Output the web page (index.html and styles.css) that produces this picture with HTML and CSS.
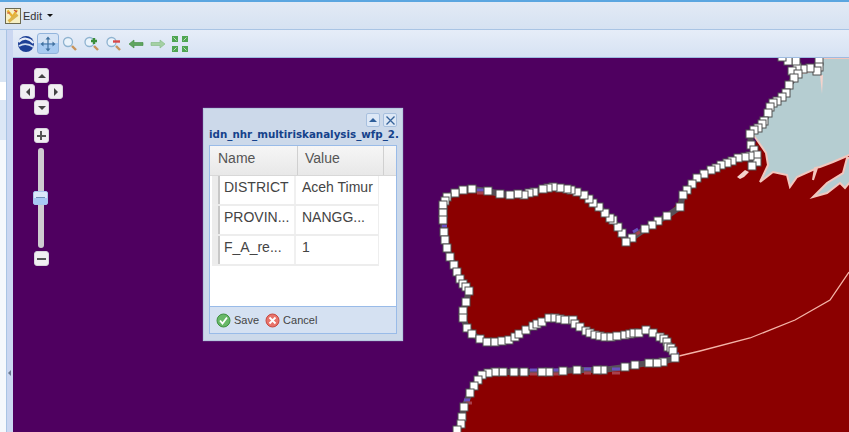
FILE: index.html
```html
<!DOCTYPE html>
<html lang="en">
<head>
<meta charset="utf-8">
<title>Map editor</title>
<link rel="stylesheet" href="styles.css">
</head>
<body>
<div class="app">
  <header class="menubar">
    <svg class="edit-icon" width="16" height="16" viewBox="0 0 16 16">
      <rect x="0.5" y="0.5" width="15" height="15" fill="#f6efc4" stroke="#6d6a50"/>
      <path d="M2.500 2.500l5 6M12 2L6 11" stroke="#e8b030" stroke-width="2.200" fill="none"/>
      <path d="M3.500 13.500l9-7" stroke="#dcb44a" stroke-width="3" fill="none"/>
      <path d="M2 5h3M9 2l3 2" stroke="#c85040" stroke-width="1.200" fill="none"/>
    </svg>
    <span class="menu-label">Edit</span>
    <span class="menu-caret"></span>
  </header>
  <div class="workspace">
    <aside class="side">
      <div class="side-panel">
        <div class="side-head"></div>
        <div class="side-row-white"></div>
        <div class="side-row-blue"></div>
      </div>
      <div class="splitter"><span class="split-arrow"></span></div>
    </aside>
    <main class="main">
      <div class="toolbar">
        <div class="tool">
          <svg width="18" height="18" viewBox="0 0 18 18">
            <circle cx="9" cy="9" r="8" fill="#1c3f95"/>
            <path d="M1.500 7C6 2 12 3 16.500 8" stroke="#e8eef8" stroke-width="2.200" fill="none"/>
            <path d="M2 11c5-3 10-2 14.500 1" stroke="#cfdcf0" stroke-width="1.800" fill="none"/>
          </svg>
        </div>
        <div class="tool tool-active">
          <svg width="16" height="16" viewBox="0 0 16 16">
            <path d="M8 2v12M2 8h12" stroke="#41719f" stroke-width="1.200" fill="none"/>
            <path d="M8 0.500l-2.500 3h5zM8 15.500l-2.500-3h5zM0.500 8l3-2.500v5zM15.500 8l-3-2.500v5z" fill="#41719f"/>
          </svg>
        </div>
        <div class="tool">
          <svg width="16" height="16" viewBox="0 0 16 16">
            <circle cx="6" cy="6" r="4.500" fill="#eaf3fb" stroke="#8fb3d0" stroke-width="1.300"/>
            <path d="M10 10l4 4" stroke="#c8935a" stroke-width="2.400"/>
          </svg>
        </div>
        <div class="tool">
          <svg width="16" height="16" viewBox="0 0 16 16">
            <circle cx="5.500" cy="6" r="4.500" fill="#eaf3fb" stroke="#8fb3d0" stroke-width="1.300"/>
            <path d="M10 10l4 4" stroke="#c8935a" stroke-width="2.400"/>
            <path d="M10 2v6M7 5h6" stroke="#3b8e3b" stroke-width="2.400"/>
          </svg>
        </div>
        <div class="tool">
          <svg width="16" height="16" viewBox="0 0 16 16">
            <circle cx="5.500" cy="6" r="4.500" fill="#eaf3fb" stroke="#8fb3d0" stroke-width="1.300"/>
            <path d="M10 10l4 4" stroke="#c8935a" stroke-width="2.400"/>
            <path d="M7 5.500h7" stroke="#d84848" stroke-width="2.400"/>
          </svg>
        </div>
        <div class="tool">
          <svg width="16" height="10" viewBox="0 0 16 10">
            <path d="M1 5l5-4v2.500h9v3H6V9z" fill="#5fa55f" stroke="#3f8a3f" stroke-width="0.600"/>
          </svg>
        </div>
        <div class="tool">
          <svg width="16" height="10" viewBox="0 0 16 10">
            <path d="M15 5l-5-4v2.500H1v3h9V9z" fill="#a4d0a4" stroke="#80b880" stroke-width="0.600"/>
          </svg>
        </div>
        <div class="tool">
          <svg width="18" height="18" viewBox="0 0 18 18">
            <path d="M1 1h6v6H1zM11 1h6v6h-6zM1 11h6v6H1zM11 11h6v6h-6z" fill="#4fa552"/>
            <path d="M2.500 2.500l3 3M15.500 2.500l-3 3M2.500 15.500l3-3M15.500 15.500l-3-3" stroke="#bfe0bf" stroke-width="1"/>
          </svg>
        </div>
      </div>
      <div class="map">
        <svg class="map-canvas" viewBox="13 58 836 374">
          <defs>
            <marker id="vertex" markerUnits="userSpaceOnUse" markerWidth="10" markerHeight="10" refX="5" refY="5" overflow="visible">
              <rect x="1" y="1" width="8" height="8" fill="#fff" stroke="#505050" stroke-width="1"/>
            </marker>
          </defs>
          <path class="land" d="M757 140L750 156 745 157 738 158 727 163 711 170 697 178 687 190 667 216 652 225 636 233 626 242 618 227 605 213 589 199 571 190 553 187 534 192 518 194 500 194 480 190 463 190 447 197 443 213 445 240 454 265 469 291 466 302 463 318 472 334 487 342 509 340 526 330 549 318 573 320 590 333 611 337 646 330 664 339 675 358 635 365 587 370 533 372 488 373 478 380 467 401 461 424 457 432H849V140z"/>
          <path class="water" d="M819 58H851V154L847 156 833 162 820 167 815 168 813 180 817 168 797 177 790 187 787 175 773 172 760 182 768 165 766 153 757 140 750 131 758 128 768 113 782 97 789 85 798 74 817 70z"/>
          <path class="water" d="M851 158H847L843 173 827 183 813 197 827 193 840 183 845 188 851 181z"/>
          <path class="sliver" d="M820 75l2 19 1-19zM737 177l8-7 4 2-5 5-4 2z"/>
          <polyline class="roadline" points="679 356 700 351 750 338 795 320 830 300 849 272"/>
          <polyline class="edge" points="819 61 819 67 817 71 810 68 803 69 797 67 792 71 798 74 794 78 789 85 786 93 782 97 777 101 773 103 770 107 768 113 764 121 762 124 758 128 754 130 750 134 751 145 754 150 757 155 757 162 752 166 750 156 745 157 738 158 732 161 727 163 721 165 716 168 711 170 704 174 697 178 692 184 687 190 683 195 680 207 667 216 658 221 652 225 645 229 632 238 626 242 622 233 618 227 613 220 610 218 605 213 599 207 593 203 589 199 584 195 577 192 571 190 567 189 560 188 553 187 548 188 543 189 534 192 529 193 524 195 518 194 510 195 500 194 488 191 472 189 463 190 455 193 447 197 445 201 443 205 443 213 443 220 444 232 445 240 447 248 450 257 454 265 457 272 460 279 463 284 466 287 469 291 466 302 463 311 463 318 467 328 472 334 480 339 487 342 495 342 502 341 509 340 515 337 519 334 526 330 533 326 537 324 542 322 549 318 555 318 560 319 565 320 573 320 575 324 580 327 586 331 590 333 595 335 600 336 605 337 611 337 617 336 625 335 630 334 634 333 639 333 646 330 653 333 660 337 664 339 667 342 668 347 671 348 673 351 675 358 663 362 657 363 649 363 635 365 625 367 603 370 597 370 577 370 563 371 549 372 542 372 524 372 514 372 503 372 495 372 488 373 482 375 478 380 474 386 470 393 464 407 462 417 461 424 457 430"/>
          <path class="gap-top" d="M477 190h7M633 232l5-3M442 226h5M464 400h6M612 369h8M584 369h7M553 370h7M530 370h7M675 354h4"/>
          <path class="gap-low" d="M477 193h7M635 235l5-3M466 403h6M612 373h8M584 373h7M553 374h7M530 374h7"/>
          <polyline class="vertices" points="819 61 819 67 817 71 810 68 803 69 797 67 792 71 798 74 794 78 789 85 786 93 782 97 777 101 773 103 770 107 768 113 764 121 762 124 758 128 754 130 750 134 751 145 754 150 757 155 757 162 752 166 750 156 745 157 738 158 732 161 727 163 721 165 716 168 711 170 704 174 697 178 692 184 687 190 683 195 680 207 667 216 658 221 652 225 645 229 632 238 626 242 622 233 618 227 613 220 610 218 605 213 599 207 593 203 589 199 584 195 577 192 571 190 567 189 560 188 553 187 548 188 543 189 534 192 529 193 524 195 518 194 510 195 500 194 488 191 472 189 463 190 455 193 447 197 445 201 443 205 443 213 443 220 444 232 445 240 447 248 450 257 454 265 457 272 460 279 463 284 466 287 469 291 466 302 463 311 463 318 467 328 472 334 480 339 487 342 495 342 502 341 509 340 515 337 519 334 526 330 533 326 537 324 542 322 549 318 555 318 560 319 565 320 573 320 575 324 580 327 586 331 590 333 595 335 600 336 605 337 611 337 617 336 625 335 630 334 634 333 639 333 646 330 653 333 660 337 664 339 667 342 668 347 671 348 673 351 675 358 663 362 657 363 649 363 635 365 625 367 603 370 597 370 577 370 563 371 549 372 542 372 524 372 514 372 503 372 495 372 488 373 482 375 478 380 474 386 470 393 464 407 462 417 461 424 457 430"/>
          <polyline class="vertices" points="796 61 788 61 782 57"/>
        </svg>

        <div class="nav">
          <div class="pan">
            <button class="nav-btn pan-up"><span class="tri tri-up"></span></button>
            <button class="nav-btn pan-left"><span class="tri tri-left"></span></button>
            <button class="nav-btn pan-right"><span class="tri tri-right"></span></button>
            <button class="nav-btn pan-down"><span class="tri tri-down"></span></button>
          </div>
          <button class="nav-btn zoom-in"><span class="sign sign-plus"></span></button>
          <div class="slider"><span class="thumb"></span></div>
          <button class="nav-btn zoom-out"><span class="sign"></span></button>
        </div>

        <section class="popup">
          <div class="popup-tools">
            <span class="ptool"><span class="tri tri-up tri-blue"></span></span>
            <span class="ptool">
              <svg width="11" height="11" viewBox="0 0 11 11"><path d="M1.500 1.500l8 8M9.500 1.500l-8 8" stroke="#36639a" stroke-width="1.300"/></svg>
            </span>
          </div>
          <h2 class="popup-title">idn_nhr_multiriskanalysis_wfp_2.</h2>
          <div class="grid">
            <div class="grid-head">
              <span class="hcell hname">Name</span>
              <span class="hcell hvalue">Value</span>
              <span class="hcell hscroll"></span>
            </div>
            <div class="grid-body">
              <div class="row"><span class="mark"></span><span class="cname">DISTRICT</span><span class="cvalue">Aceh Timur</span></div>
              <div class="row"><span class="mark"></span><span class="cname">PROVIN...</span><span class="cvalue">NANGG...</span></div>
              <div class="row"><span class="mark"></span><span class="cname">F_A_re...</span><span class="cvalue">1</span></div>
            </div>
            <div class="grid-foot">
              <span class="act">
                <svg width="15" height="15" viewBox="0 0 15 15"><circle cx="7.500" cy="7.500" r="6.500" fill="#68b868" stroke="#3f9040"/><path d="M4 7.500l2.500 3L11 4.500" stroke="#fff" stroke-width="1.800" fill="none"/></svg>
                Save
              </span>
              <span class="act">
                <svg width="15" height="15" viewBox="0 0 15 15"><circle cx="7.500" cy="7.500" r="6.500" fill="#e8736a" stroke="#c8483f"/><path d="M4.500 4.500l6 6M10.500 4.500l-6 6" stroke="#fff" stroke-width="1.800"/></svg>
                Cancel
              </span>
            </div>
          </div>
        </section>
      </div>
    </main>
  </div>
</div>
</body>
</html>
```
FILE: styles.css
```css
* { box-sizing: border-box; }
html, body { margin: 0; padding: 0; }
body { width: 849px; height: 432px; overflow: hidden; font-family: "Liberation Sans", Arial, sans-serif; }
.app { display: flex; flex-direction: column; width: 849px; height: 432px; background: #dfe8f6; }

.menubar {
  flex: none; height: 30px; display: flex; align-items: center; padding: 0 0 0 5px;
  border-top: 2px solid #5ba6e0; border-bottom: 1px solid #a9c4e4;
  background: linear-gradient(#e2eaf5, #d6e2f2);
}
.edit-icon { flex: none; }
.menu-label { margin-left: 2px; font-size: 11px; color: #333; }
.menu-caret { margin-left: 5px; border-style: solid; border-width: 3px 3px 0; border-color: #111 transparent transparent; }

.workspace { flex: 1; display: flex; min-height: 0; }
.side { flex: none; width: 13px; display: flex; }
.side-panel { width: 6px; background: #f5f8fc; display: flex; flex-direction: column; }
.side-head { height: 52px; background: #d9e5f4; }
.side-row-white { height: 18px; background: #fff; }
.side-row-blue { height: 40px; background: #dce7f6; }
.splitter { width: 7px; background: #cbd7f1; border-left: 1px solid #a9c4e4; display: flex; align-items: center; position: relative; }
.split-arrow { margin: 284px 0 0 1px; border-style: solid; border-width: 3px 3px 3px 0; border-color: transparent #6a7a90 transparent transparent; }

.main { flex: 1; display: flex; flex-direction: column; min-width: 0; }
.toolbar { flex: none; height: 28px; display: flex; align-items: center; padding-left: 2px; background: linear-gradient(#e6edf8, #d6e2f3); border-bottom: 1px solid #9dbbe0; }
.tool { flex: none; width: 22px; height: 21px; display: flex; align-items: center; justify-content: center; }
.tool-active { border: 1px solid #92b4dc; border-radius: 3px; background: linear-gradient(#d5e3f5 50%, #a8cbf2 50%); }

.map { flex: 1; position: relative; background: #4f0060; overflow: hidden; }
.map-canvas { position: absolute; left: 0; top: 0; width: 836px; height: 374px; display: block; }
.land { fill: #8b0000; }
.water { fill: #b5cdd1; stroke: #f3c6bd; stroke-width: 2; }
.sliver { fill: #f4d3cc; }
.roadline { fill: none; stroke: #f4b4a8; stroke-width: 1.300; }
.edge { fill: none; stroke: #585058; stroke-width: 6; stroke-linejoin: round; }
.gap-top { fill: none; stroke: #6a50c0; stroke-width: 3; }
.gap-low { fill: none; stroke: #a8404c; stroke-width: 3; }
.vertices { fill: none; stroke: none; marker-start: url(#vertex); marker-mid: url(#vertex); marker-end: url(#vertex); }

.nav { position: absolute; left: 7px; top: 10px; width: 42px; display: flex; flex-direction: column; align-items: center; }
.pan { display: grid; grid-template-columns: repeat(3, 14px); grid-template-rows: repeat(3, 16px); height: 48px; }
.nav-btn { width: 15px; height: 15px; padding: 0; display: flex; align-items: center; justify-content: center; border: 1px solid #d8d4dc; border-radius: 3px; background: #f1eff2; }
.pan-up { grid-area: 1 / 2; }
.pan-left { grid-area: 2 / 1; }
.pan-right { grid-area: 2 / 3; }
.pan-down { grid-area: 3 / 2; }
.tri { display: block; border-style: solid; width: 0; height: 0; }
.tri-up { border-width: 0 4px 4px; border-color: transparent transparent #444; }
.tri-down { border-width: 4px 4px 0; border-color: #444 transparent transparent; }
.tri-left { border-width: 4px 4px 4px 0; border-color: transparent #444 transparent transparent; }
.tri-right { border-width: 4px 0 4px 4px; border-color: transparent transparent transparent #444; }
.tri-blue { border-bottom-color: #2f5f9a; }
.zoom-in { margin-top: 12px; }
.zoom-out { margin-top: 3px; }
.sign { display: block; position: relative; width: 9px; height: 2px; background: #555; }
.sign-plus::after { content: ""; position: absolute; left: 3.500px; top: -3.500px; width: 2px; height: 9px; background: #555; }
.slider { position: relative; width: 6px; height: 100px; margin-top: 5px; border-radius: 3px; background: #cfcbd1; }
.thumb { position: absolute; left: -5px; top: 43px; width: 15px; height: 14px; border: 1px solid #a8c6ee; border-radius: 2px; background: linear-gradient(#dbe8fa 50%, #a9c9f4 50%); }
.thumb::after { content: ""; position: absolute; left: 2px; top: 5px; width: 9px; height: 1px; background: #6f8fb8; }

.popup { position: absolute; left: 190px; top: 50px; width: 200px; height: 233px; padding: 4px 5px 6px; display: flex; flex-direction: column; background: #ccd9ea; border: 1px solid #b8c9e0; box-shadow: 0 0 1px #8ca0c0; }
.popup-tools { flex: none; height: 14px; display: flex; justify-content: flex-end; gap: 3px; }
.ptool { width: 14px; height: 14px; display: flex; align-items: center; justify-content: center; border: 1px solid #a8c0de; border-radius: 2px; background: #dde8f6; }
.popup-title { flex: none; margin: 0 0 4px; height: 14px; line-height: 14px; font-weight: bold; color: #15428b; white-space: nowrap; font-family: "DejaVu Sans", sans-serif; font-size: 10.300px; }
.grid { flex: 1; display: flex; flex-direction: column; min-height: 0; border: 1px solid #99bbe8; background: #fff; }
.grid-head { flex: none; height: 30px; display: flex; background: linear-gradient(#f6f6f6, #e8e8e8); border-bottom: 1px solid #d8d8d8; }
.hcell { display: flex; align-items: center; font-size: 14px; color: #555; border-right: 1px solid #d0d0d0; }
.hname { width: 88px; padding-left: 8px; padding-bottom: 5px; }
.hvalue { width: 86px; padding-left: 7px; padding-bottom: 5px; }
.hscroll { flex: 1; border-right: 0; }
.grid-body { flex: 1; padding: 0 0 0 2px; }
.row { display: flex; width: 167px; height: 30px; border-bottom: 2px solid #ededed; border-right: 1px solid #eeeeee; font-size: 14px; color: #444; align-items: flex-start; }
.mark { flex: none; width: 8px; height: 28px; background: #ececec; border-right: 2px solid #c8c8c8; }
.cname { flex: none; width: 76px; height: 28px; padding: 3px 0 0 4px; line-height: 17px; border-right: 2px solid #f0f0f0; white-space: nowrap; overflow: hidden; }
.cvalue { flex: 1; padding: 3px 0 0 6px; line-height: 17px; white-space: nowrap; }
.grid-foot { flex: none; height: 27px; display: flex; align-items: center; gap: 6px; padding-left: 6px; background: #d5e1f2; border-top: 1px solid #99bbe8; }
.act { display: flex; align-items: center; gap: 3px; font-size: 11px; color: #444; }
```
